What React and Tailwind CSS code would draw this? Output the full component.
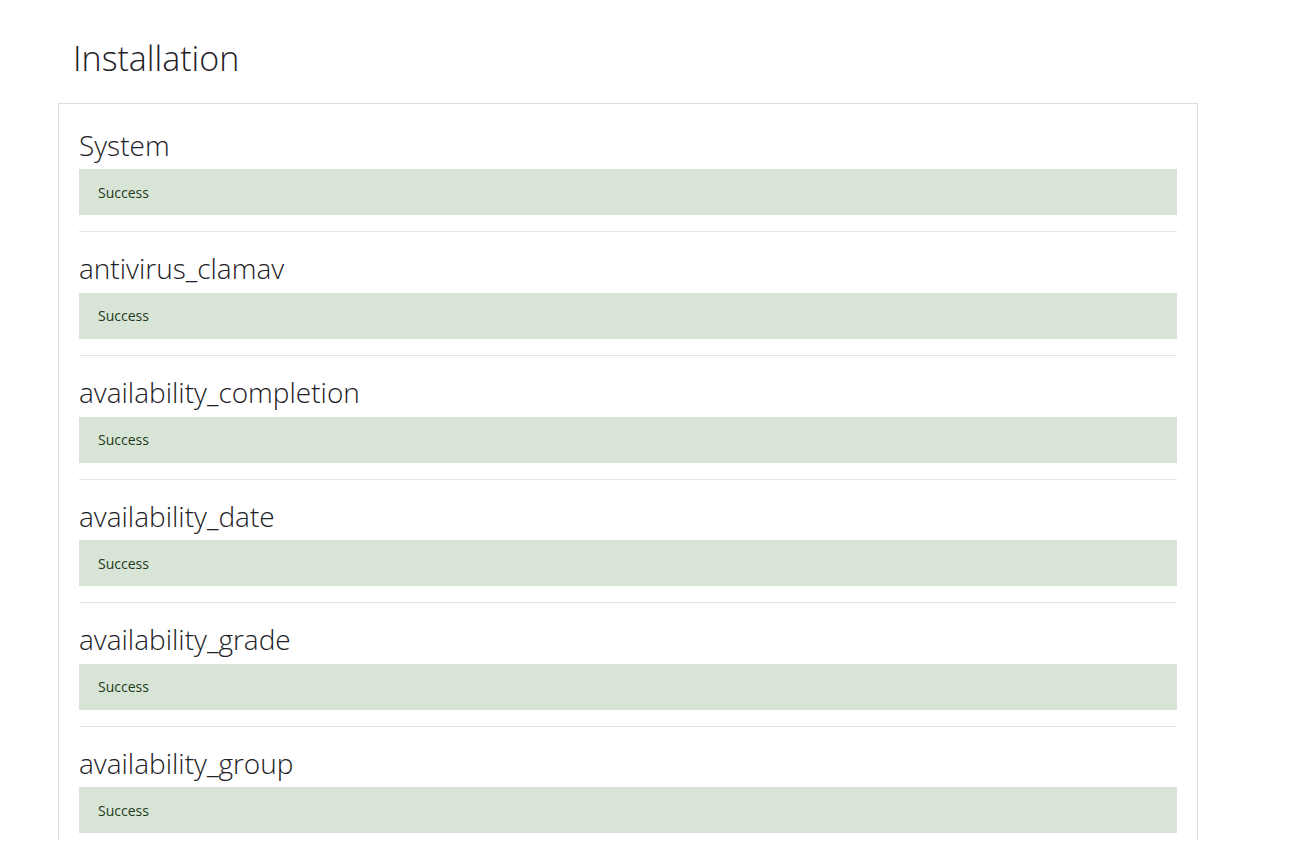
import React from 'react'

const items = [
  'System',
  'antivirus_clamav',
  'availability_completion',
  'availability_date',
  'availability_grade',
  'availability_group',
]

function Item({ name, first }) {
  return (
    <div className={first ? '' : 'border-t border-[#e3e3e3] mt-4 pt-4'}>
      <h3 className="text-[28px] leading-[1.2] font-light text-[#1d2125] mt-1 mb-[7px]">{name}</h3>
      <div className="h-[46px] flex items-center px-[19px] bg-[#d8e4d6] text-[#1c3b1a] text-[14px]">
        Success
      </div>
    </div>
  )
}

export default function App() {
  return (
    <div className="min-h-screen bg-white font-['Open_Sans',sans-serif]">
      <div className="pl-[58px] w-[1198px] pt-[38px]">
        <h2 className="pl-[15px] text-[34px] leading-[1.2] font-light text-[#1d2125] mb-[24px]">Installation</h2>
        <div className="border border-[#dedede] px-5 pt-[21px] pb-5">
          {items.map((n, i) => (
            <Item key={n} name={n} first={i === 0} />
          ))}
        </div>
      </div>
    </div>
  )
}
